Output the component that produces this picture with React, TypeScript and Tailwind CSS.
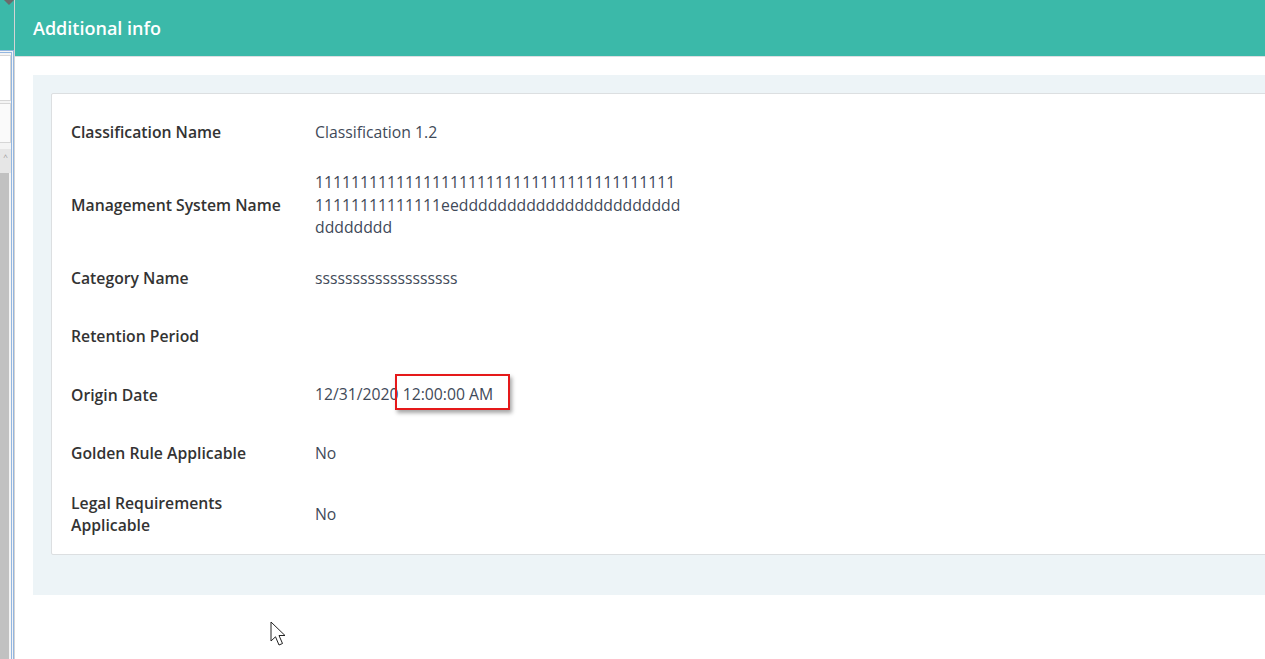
const rows = [
  { label: "Classification Name", value: ["Classification 1.2"] },
  {
    label: "Management System Name",
    value: [
      "1111111111111111111111111111111111111111",
      "11111111111111eeddddddddddddddddddddddd",
      "dddddddd",
    ],
  },
  { label: "Category Name", value: ["sssssssssssssssssss"] },
  { label: "Retention Period", value: [] },
  { label: "Origin Date", value: ["12/31/2020 12:00:00 AM"] },
  { label: "Golden Rule Applicable", value: ["No"] },
  { label: "Legal Requirements Applicable", value: ["No"] },
];

const App = () => {
  return (
    <div className="relative flex w-[1265px] h-[659px] overflow-hidden bg-white font-['Open_Sans',sans-serif]">
      {/* Page behind the dialog */}
      <div className="flex w-[14px] shrink-0 flex-col">
        <div className="relative h-[50px] bg-[#3bb9a9]">
          <div className="absolute right-0 top-0 h-0 w-0 border-x-[5px] border-t-[5px] border-x-transparent border-t-[#6b6b6b]"></div>
        </div>
        <div className="flex flex-1 flex-col border-t-[3px] border-r-[3px] border-double border-[#93b6e0] bg-[#f4f4f4]">
          <div className="mt-[2px] h-[46px] border border-l-0 border-[#d6d6d6] bg-white"></div>
          <div className="mt-[2px] h-[40px] border border-l-0 border-[#d6d6d6] bg-[#fafafa]"></div>
          <div className="mt-[6px] flex h-[24px] items-start justify-center bg-[#e6e6e6] text-[8px] leading-[16px] text-[#9a9a9a]">^</div>
          <div className="w-[9px] flex-1 bg-[#c1c1c1]"></div>
        </div>
      </div>

      {/* Dialog */}
      <div className="flex w-[1300px] shrink-0 flex-col border-l border-[#d4d4d4]">
        <div className="flex h-[57px] shrink-0 items-center border-b border-[#dcdfe2] bg-[#3bb9a9] px-[18px] text-[18px] font-semibold text-white">
          Additional info
        </div>
        <div className="pl-[18px] pt-[18px]">
          <div className="bg-[#edf4f7] pb-[40px] pl-[18px] pt-[18px]">
            <div className="rounded-[2px] border border-[#dcdfe1] bg-white pb-[8px] pl-[19px] pt-[9px]">
              {rows.map((row) => (
                <div key={row.label} className="flex min-h-[58.3px] items-center py-[10px] text-[15.75px] leading-[1.43]">
                  <div className="w-[244px] shrink-0 pr-[24px] font-semibold leading-[22px] text-[#333333]">{row.label}</div>
                  <div className="text-[#3f4a59]">
                    {row.value.map((line) => (
                      <div key={line}>{line}</div>
                    ))}
                  </div>
                </div>
              ))}
            </div>
          </div>
        </div>
      </div>

      {/* Highlight box drawn over the screenshot */}
      <div className="absolute left-[395px] top-[374px] h-[36px] w-[115px] border-2 border-[#e5191a] shadow-[2px_3px_4px_rgba(0,0,0,0.35)]"></div>

      {/* Mouse pointer */}
      <svg className="absolute left-[270px] top-[621px]" width="20" height="28" viewBox="0 0 20 28">
        <path
          d="M1 1 L1 20 L5.5 15.8 L9 24 L12.5 22.5 L9 14.5 L15 14.5 Z"
          fill="white"
          stroke="#222"
          strokeWidth="1"
          strokeLinejoin="round"
        />
      </svg>
    </div>
  );
};

export default App;
